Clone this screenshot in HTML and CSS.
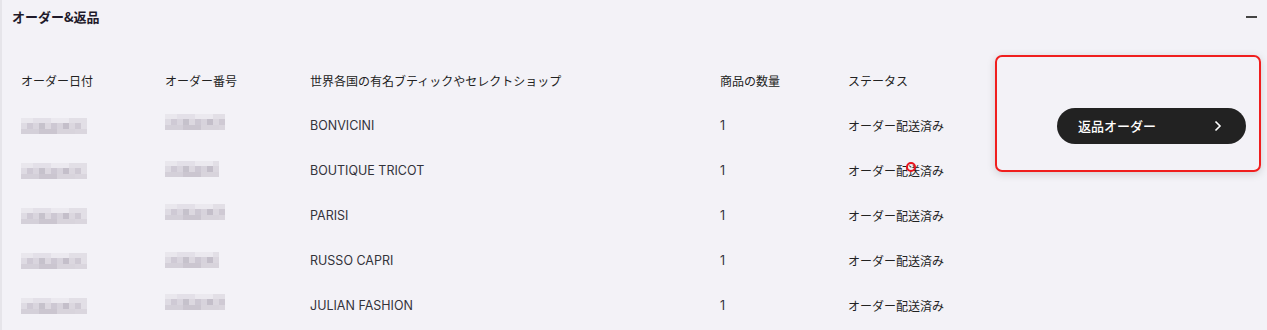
FILE: index.html
```html
<!DOCTYPE html>
<html lang="ja">
<head>
    <meta charset="UTF-8">
    <title>オーダー&amp;返品</title>
    <link rel="stylesheet" href="styles.css">
</head>
<body>
    <div class="panel">
        <div class="panel-head">
            <h2>オーダー&amp;返品</h2>
            <span class="collapse"></span>
        </div>
        <div class="orders">
            <div class="cell th">オーダー日付</div>
            <div class="cell th">オーダー番号</div>
            <div class="cell th">世界各国の有名ブティックやセレクトショップ</div>
            <div class="cell th">商品の数量</div>
            <div class="cell th">ステータス</div>
            <div class="cell"></div>

            <div class="cell"><span class="blur b1"></span></div>
            <div class="cell"><span class="blur b2"></span></div>
            <div class="cell latin">BONVICINI</div>
            <div class="cell latin">1</div>
            <div class="cell">オーダー配送済み</div>
            <div class="cell action">
                <button class="return-btn">返品オーダー
                    <svg class="chev" width="8" height="12" viewBox="0 0 8 12"><path d="M1.5 1.5 L6 6 L1.5 10.5" fill="none" stroke="#fff" stroke-width="1.6"/></svg>
                </button>
            </div>

            <div class="cell"><span class="blur b1"></span></div>
            <div class="cell"><span class="blur b3"></span></div>
            <div class="cell latin">BOUTIQUE TRICOT</div>
            <div class="cell latin">1</div>
            <div class="cell status">オーダー配送済み<span class="marker"></span></div>
            <div class="cell"></div>

            <div class="cell"><span class="blur b1"></span></div>
            <div class="cell"><span class="blur b2"></span></div>
            <div class="cell latin">PARISI</div>
            <div class="cell latin">1</div>
            <div class="cell">オーダー配送済み</div>
            <div class="cell"></div>

            <div class="cell"><span class="blur b1"></span></div>
            <div class="cell"><span class="blur b4"></span></div>
            <div class="cell latin">RUSSO CAPRI</div>
            <div class="cell latin">1</div>
            <div class="cell">オーダー配送済み</div>
            <div class="cell"></div>

            <div class="cell"><span class="blur b1"></span></div>
            <div class="cell"><span class="blur b2"></span></div>
            <div class="cell latin">JULIAN FASHION</div>
            <div class="cell latin">1</div>
            <div class="cell">オーダー配送済み</div>
            <div class="cell"></div>
        </div>
        <div class="highlight"></div>
    </div>
</body>
</html>
```

FILE: styles.css
```css
body {
    margin: 0;
    background: #f3f2f7;
    font-family: "Noto Sans CJK JP", "Liberation Sans", sans-serif;
    color: #222;
    font-size: 12px;
}

.panel {
    position: relative;
    height: 330px;
    border-left: 2px solid #e6e5ea;
    overflow: hidden;
}

.panel-head {
    display: flex;
    justify-content: space-between;
    align-items: center;
    height: 33px;
    padding: 0 10px 0 10px;
}

.panel-head h2 {
    margin: 0;
    font-size: 13px;
    font-weight: 600;
    color: #1f1a2a;
}

.collapse {
    width: 11px;
    height: 2px;
    background: #444;
    margin-top: 1px;
}

.orders {
    display: grid;
    grid-template-columns: 144px 145px 410px 128px 196px 1fr;
    grid-auto-rows: 45px;
    margin-top: 25px;
    padding-left: 19px;
}

.cell {
    display: flex;
    align-items: center;
    white-space: nowrap;
}

.th {
    color: #222;
}

.latin {
    font-family: "Inter", "Liberation Sans", sans-serif;
    font-size: 12.5px;
    color: #33333b;
}

.status {
    position: relative;
}

.blur {
    display: block;
    height: 16px;
    background:
        linear-gradient(90deg, #dedbe3 0 6px, #cfcad5 6px 12px, #d9d5de 12px 18px, #c6c2cc 18px 24px, #dcd8e0 24px 30px, #cdc8d3 30px 36px, #d7d3dc 36px 42px, #c4bfca 42px 48px, #dbd7df 48px 54px, #cfcad4 54px 60px, #e2dfe6 60px 66px) 0 5px / 100% 6px no-repeat,
        linear-gradient(90deg, #e9e7ed 0 12px, #e3e0e8 12px 30px, #ebe9ef 30px 48px, #e2dfe6 48px 66px) 0 0 / 100% 5px no-repeat,
        linear-gradient(90deg, #d4d0d9 0 18px, #cbc6d0 18px 36px, #d8d4dc 36px 54px, #dad6de 54px 66px) 0 11px / 100% 5px no-repeat;
}

.b1 { width: 66px; }
.b2 { width: 60px; height: 24px; }
.b3 { width: 54px; height: 20px; }
.b4 { width: 54px; height: 18px; }

.action {
    padding-left: 13px;
}

.return-btn {
    display: flex;
    justify-content: space-between;
    align-items: center;
    width: 189px;
    height: 36px;
    padding: 0 24px 0 21px;
    border: none;
    border-radius: 18px;
    background: #222;
    color: #fff;
    font-family: "Noto Sans CJK JP", sans-serif;
    font-size: 13px;
    font-weight: 500;
}

.highlight {
    position: absolute;
    left: 993px;
    top: 55px;
    width: 262px;
    height: 113px;
    border: 2px solid #f01e1e;
    border-radius: 7px;
    box-shadow: 0 2px 8px rgba(0, 0, 0, 0.15);
}

.marker {
    position: absolute;
    left: 58px;
    top: 14px;
    width: 6px;
    height: 6px;
    border: 2px solid #e8141e;
    border-radius: 50%;
}
```
